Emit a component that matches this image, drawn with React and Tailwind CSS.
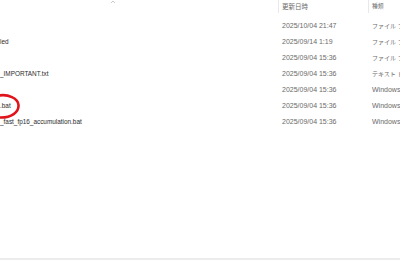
export default function App() {
  const rows = [
    { name: "", date: "2025/10/04 21:47", type: ["", "ファイル フォルダー"] },
    { name: "led", date: "2025/09/14 1:19", type: ["", "ファイル フォルダー"] },
    { name: "", date: "2025/09/04 15:36", type: ["", "ファイル フォルダー"] },
    { name: "_IMPORTANT.txt", date: "2025/09/04 15:36", type: ["", "テキスト ドキュメント"] },
    { name: "", date: "2025/09/04 15:36", type: ["Windows", " バッチ ファイル"] },
    { name: ".bat", date: "2025/09/04 15:36", type: ["Windows", " バッチ ファイル"], circled: true },
    { name: "_fast_fp16_accumulation.bat", date: "2025/09/04 15:36", type: ["Windows", " バッチ ファイル"] },
  ];
  const font = { fontFamily: "'Liberation Sans', 'Noto Sans CJK JP', sans-serif" };
  return (
    <div className="w-[400px] h-[260px] bg-white overflow-hidden flex flex-col" style={font}>
      <div className="h-[13px] flex text-[6.5px] text-[#6b6b6b] leading-[13px] shrink-0">
        <div className="w-[278px] relative">
          <svg className="absolute left-[110px] top-0" width="6" height="4" viewBox="0 0 6 4">
            <path d="M1 3 L3 1 L5 3" stroke="#bdbdbd" strokeWidth="0.8" fill="none" />
          </svg>
        </div>
        <div className="w-[90px] border-l border-[#e8e8e8] pl-[3px]">更新日時</div>
        <div className="flex-1 border-l border-[#e8e8e8] pl-[3px] text-[5.8px]">種類</div>
      </div>
      <div className="h-[5px] shrink-0" />
      <div className="flex flex-col">
        {rows.map((r, i) => (
          <div key={i} className="h-[16px] flex items-center whitespace-nowrap">
            <div className="w-[278px] text-[#2b2b2b] text-[6.4px] leading-[16px] relative">
              {r.name}
              {r.circled && (
                <svg className="absolute left-[-14px] top-[-5px]" width="36" height="27" viewBox="0 0 36 27">
                  <path
                    d="M13 2.5 C22 1 32 5 32.5 12 C33 19.5 25 24.5 15 24.5 C7 24.5 1.5 20 1.5 14"
                    stroke="#e0141b"
                    strokeWidth="2.6"
                    fill="none"
                    strokeLinecap="round"
                  />
                </svg>
              )}
            </div>
            <div className="w-[90px] pl-[4px] text-[7px] leading-[16px] text-[#6a6a6a]">{r.date}</div>
            <div className="flex-1 pl-[4px] text-[7px] leading-[16px] text-[#6a6a6a] overflow-hidden">
              {r.type[0]}
              <span className="text-[6px]">{r.type[1]}</span>
            </div>
          </div>
        ))}
      </div>
      <div className="flex-1" />
      <div className="h-[2px] bg-[#ececec] shrink-0" />
    </div>
  );
}
